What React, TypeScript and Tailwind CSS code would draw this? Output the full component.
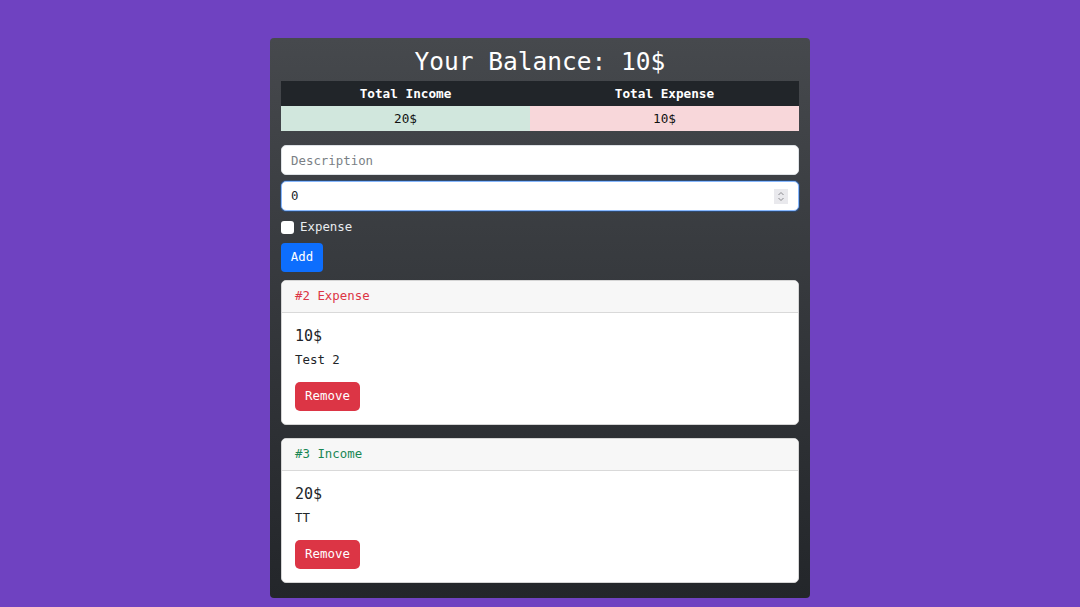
import { useState } from "react";

type Entry = {
  id: number;
  amount: number;
  text: string;
  expense: boolean;
};

const entries: Entry[] = [
  { id: 2, amount: 10, text: "Test 2", expense: true },
  { id: 3, amount: 20, text: "TT", expense: false },
];

const mono = "font-['DejaVu_Sans_Mono','Liberation_Mono',monospace]";

function EntryCard({ entry }: { entry: Entry }) {
  return (
    <div className="rounded-[5px] border border-[#d5d5d5] bg-white overflow-hidden">
      <div
        className={
          "h-[32px] flex items-center px-[13px] bg-[#f7f7f7] border-b border-[#d9d9d9] text-[12.4px] " +
          (entry.expense ? "text-[#dc3545]" : "text-[#198754]")
        }
      >
        #{entry.id} {entry.expense ? "Expense" : "Income"}
      </div>
      <div className="px-[13px] pt-[12px] pb-[13px] text-[#212529]">
        <div className="text-[15px] leading-[22px]">{entry.amount}$</div>
        <div className="text-[12.4px] leading-[18px] mt-[4px]">{entry.text}</div>
        <button className="mt-[13px] h-[29px] w-[65px] rounded-[5px] bg-[#dc3545] text-white text-[12.4px]">
          Remove
        </button>
      </div>
    </div>
  );
}

export default function App() {
  const [desc, setDesc] = useState("");
  const [amount, setAmount] = useState("0");

  return (
    <div className={`min-h-[607px] w-full bg-[#6f42c1] flex justify-center pt-[38px] ${mono}`}>
      <div className="w-[540px] h-[560px] rounded-[4px] bg-gradient-to-b from-[#46494d] to-[#23262a] px-[11px] pb-[14px]">
        <div className="h-[43px] pt-[6px] flex items-center justify-center text-[24.5px] text-white">
          Your Balance: 10$
        </div>

        <div className="grid grid-cols-[249px_1fr] text-center text-[12.7px]">
          <div className="h-[25px] flex items-center justify-center bg-[#212529] text-white font-bold">
            Total Income
          </div>
          <div className="h-[25px] flex items-center justify-center bg-[#212529] text-white font-bold">
            Total Expense
          </div>
          <div className="h-[25px] flex items-center justify-center bg-[#d1e7dd] text-[#111]">20$</div>
          <div className="h-[25px] flex items-center justify-center bg-[#f8d7da] text-[#111]">10$</div>
        </div>

        <input
          value={desc}
          onChange={(e) => setDesc(e.target.value)}
          placeholder="Description"
          className="mt-[14px] block w-full h-[30px] rounded-[5px] border border-[#dee2e6] bg-white px-[9px] text-[12.4px] text-[#212529] placeholder:text-[#7a7f85] outline-none"
        />

        <div className="mt-[6px] flex items-center h-[30px] rounded-[5px] border border-[#86b7fe] bg-white pl-[9px] pr-[10px] shadow-[0_0_0_1px_rgba(13,110,253,0.25)]">
          <input
            value={amount}
            onChange={(e) => setAmount(e.target.value)}
            className="flex-1 min-w-0 bg-transparent text-[12.4px] text-[#212529] outline-none"
          />
          <div className="w-[14px] h-[15px] bg-[#e9e9ed] flex items-center justify-center">
            <svg width="8" height="11" viewBox="0 0 8 11" fill="none" stroke="#8a8a8f" strokeWidth="1">
              <path d="M1.5 4 L4 1.5 L6.5 4" />
              <path d="M1.5 7 L4 9.5 L6.5 7" />
            </svg>
          </div>
        </div>

        <label className="mt-[8px] flex items-center gap-[6px] h-[16px] text-[12.4px] text-[#e9ecef]">
          <input type="checkbox" className="appearance-none w-[13px] h-[13px] rounded-[3px] bg-white" />
          Expense
        </label>

        <button className="mt-[8px] h-[29px] w-[42px] rounded-[4px] bg-[#0d6efd] text-white text-[12.4px]">
          Add
        </button>

        <div className="mt-[8px] flex flex-col gap-[13px]">
          {entries.map((entry) => (
            <EntryCard key={entry.id} entry={entry} />
          ))}
        </div>
      </div>
    </div>
  );
}
